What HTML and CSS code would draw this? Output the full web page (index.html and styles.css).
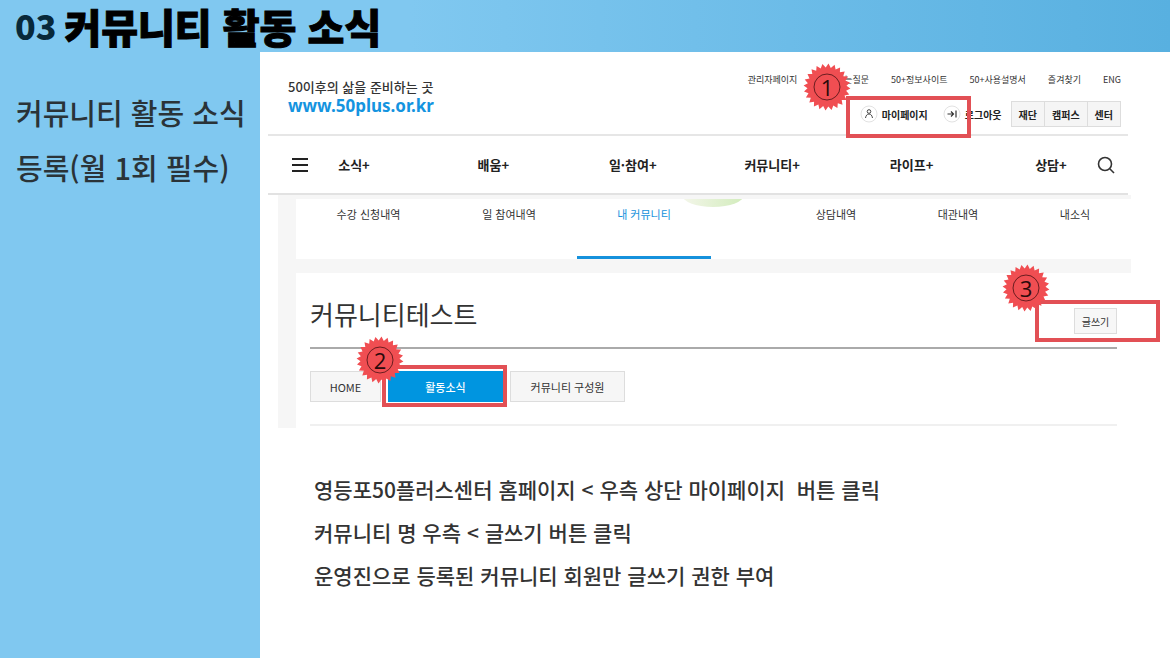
FILE: index.html
```html
<!DOCTYPE html>
<html lang="ko">
<head>
    <meta charset="UTF-8">
    <meta name="viewport" content="width=device-width, initial-scale=1.0">
    <title>커뮤니티 활동 소식</title>
    <link rel="stylesheet" href="styles.css">
</head>
<body>
    <div class="slide">
        <header class="slide-header">
            <span class="slide-number">03</span>
            <h1>커뮤니티 활동 소식</h1>
        </header>
        <div class="slide-body">
            <aside class="side">
                <p>커뮤니티 활동 소식 등록(월 1회 필수)</p>
            </aside>
            <main class="panel">
                <div class="site">
                    <div class="site-top">
                        <div class="brand">
                            <span class="brand-text">50이후의 삶을 준비하는 곳</span>
                            <a class="brand-url" href="#">www.50plus.or.kr</a>
                        </div>
                        <div class="util">
                            <div class="util-links">
                                <a href="#">관리자페이지</a>
                                <a href="#">자주묻는질문</a>
                                <a href="#">50+정보사이트</a>
                                <a href="#">50+사용설명서</a>
                                <a href="#">즐겨찾기</a>
                                <a href="#">ENG</a>
                            </div>
                            <div class="member">
                                <div class="member-links">
                                    <a href="#">
                                        <svg width="18" height="18" viewBox="0 0 18 18"><circle cx="9" cy="9" r="8" fill="#fff" stroke="#e2e2e2"/><circle cx="9" cy="6.500" r="1.800" fill="none" stroke="#444"/><path d="M5.500 13C6 10.500 7 9 9 9s3 1.500 3.500 4" fill="none" stroke="#444"/></svg>
                                        마이페이지
                                    </a>
                                    <a href="#">
                                        <svg width="18" height="18" viewBox="0 0 18 18"><circle cx="9" cy="9" r="8" fill="#fff" stroke="#e2e2e2"/><path d="M4.500 9h6M8 6.500 10.500 9 8 11.500M13 5.500v7" fill="none" stroke="#333" stroke-width="1.200"/></svg>
                                        로그아웃
                                    </a>
                                </div>
                                <div class="sites">
                                    <button type="button">재단</button>
                                    <button type="button">캠퍼스</button>
                                    <button type="button">센터</button>
                                </div>
                            </div>
                        </div>
                    </div>
                    <nav class="site-nav">
                        <button class="icon-button" type="button" aria-label="전체메뉴">
                            <svg width="16" height="16" viewBox="0 0 16 16"><path d="M0 2h16M0 8h16M0 14h16" stroke="#222" stroke-width="2"/></svg>
                        </button>
                        <ul>
                            <li><a href="#">소식+</a></li>
                            <li><a href="#">배움+</a></li>
                            <li><a href="#">일·참여+</a></li>
                            <li><a href="#">커뮤니티+</a></li>
                            <li><a href="#">라이프+</a></li>
                            <li><a href="#">상담+</a></li>
                        </ul>
                        <button class="icon-button" type="button" aria-label="검색">
                            <svg width="18" height="18" viewBox="0 0 18 18"><circle cx="8" cy="8" r="6.500" fill="none" stroke="#333" stroke-width="1.600"/><path d="m13 13 4 4" stroke="#333" stroke-width="1.600"/></svg>
                        </button>
                    </nav>
                </div>

                <div class="mypage">
                    <nav class="tabs">
                        <a href="#">수강 신청내역</a>
                        <a href="#">일 참여내역</a>
                        <a class="active" href="#">내 커뮤니티</a>
                        <a href="#">상담내역</a>
                        <a href="#">대관내역</a>
                        <a href="#">내소식</a>
                    </nav>
                    <section class="community">
                        <div class="community-head">
                            <h2>커뮤니티테스트</h2>
                            <button class="write" type="button">글쓰기</button>
                        </div>
                        <div class="community-menu">
                            <button class="home" type="button">HOME</button>
                            <button class="active" type="button">활동소식</button>
                            <button type="button">커뮤니티 구성원</button>
                        </div>
                    </section>
                </div>

                <div class="guide">
                    <p>영등포50플러스센터 홈페이지 &lt; 우측 상단 마이페이지&nbsp; 버튼 클릭</p>
                    <p>커뮤니티 명 우측 &lt; 글쓰기 버튼 클릭</p>
                    <p>운영진으로 등록된 커뮤니티 회원만 글쓰기 권한 부여</p>
                </div>

                <!-- step marks -->
                <div class="mark mark-1"><div class="badge"><span>1</span></div></div>
                <div class="mark mark-2"><div class="badge"><span>2</span></div></div>
                <div class="mark mark-3"><div class="badge"><span>3</span></div></div>
            </main>
        </div>
    </div>
    <script src="badges.js"></script>
</body>
</html>
```
FILE: badges.js
```js
// puts the toothed seal behind each step number
var TEETH = 24;

function sealPoints() {
    var points = [];
    for (var i = 0; i < TEETH * 2; i++) {
        var r = i % 2 ? 19.5 : 23.5;
        var a = Math.PI * (i + 0.5) / TEETH;
        points.push((24 + r * Math.sin(a)).toFixed(1) + ',' + (24 - r * Math.cos(a)).toFixed(1));
    }
    return points.join(' ');
}

document.querySelectorAll('.badge').forEach(function (badge) {
    badge.insertAdjacentHTML('afterbegin',
        '<svg width="48" height="48" viewBox="0 0 48 48">' +
        '<polygon points="' + sealPoints() + '" fill="#f04e52"/>' +
        '<circle cx="24" cy="24" r="13" fill="none" stroke="#6b1d20"/></svg>');
});
```
FILE: styles.css
```css
* {
    box-sizing: border-box;
}
body {
    margin: 0;
    font-family: "Noto Sans CJK KR", sans-serif;
    color: #333;
}
h1, h2, p, ul {
    margin: 0;
    padding: 0;
}
a {
    color: inherit;
    text-decoration: none;
}
button {
    font-family: inherit;
    color: inherit;
    padding: 0;
    cursor: pointer;
}
.slide {
    display: flex;
    flex-direction: column;
    min-height: 100vh;
    background: linear-gradient(90deg, #80c8f0 35%, #58b0e0);
}
.slide-header {
    display: flex;
    align-items: center;
    gap: 8px;
    height: 52px;
    padding-left: 15px;
}
.slide-number {
    font-size: 34px;
    font-weight: 900;
    line-height: 52px;
    color: #08293a;
}
.slide-header h1 {
    font-size: 40px;
    font-weight: 900;
    line-height: 52px;
    color: #000;
    -webkit-text-stroke: 1px #000;
}
.slide-body {
    display: flex;
    flex: 1;
}
.side {
    width: 260px;
    padding: 33px 0 33px 16px;
    font-size: 29px;
    font-weight: 500;
    line-height: 55px;
    color: #2a3338;
    word-break: keep-all;
}
.panel {
    position: relative;
    flex: 1;
    background: #fff;
}

/* site header */
.site {
    margin: 0 42px 0 8px;
    border-bottom: 2px solid #e2e2e2;
}
.site-top {
    display: flex;
    justify-content: space-between;
    height: 84px;
    padding: 19px 7px 0 20px;
    border-bottom: 2px solid #e6e6e6;
}
.brand {
    display: flex;
    flex-direction: column;
    padding-top: 7px;
}
.brand-text {
    font-size: 13px;
    font-weight: 500;
    line-height: 18px;
}
.brand-url {
    font-family: "Noto Sans", sans-serif;
    font-size: 17px;
    font-weight: 700;
    line-height: 20px;
    color: #1494e0;
}
.util-links {
    display: flex;
    justify-content: flex-end;
    gap: 22px;
    font-size: 9px;
    line-height: 18px;
}
.member {
    display: flex;
    align-items: center;
    justify-content: flex-end;
    gap: 9px;
    margin-top: 12px;
    font-size: 10px;
    font-weight: 700;
    color: #222;
}
.member-links {
    display: flex;
    gap: 15px;
}
.member-links a {
    display: flex;
    align-items: center;
    gap: 4px;
}
.sites {
    display: flex;
    border: 1px solid #ddd;
    background: #f5f5f5;
}
.sites button {
    height: 24px;
    padding: 0 7px;
    border: 0;
    background: none;
    font-size: 10px;
    font-weight: 700;
}
.sites button + button {
    border-left: 1px solid #ddd;
}
.site-nav {
    display: flex;
    align-items: center;
    gap: 16px;
    height: 57px;
    padding: 0 13px 0 24px;
}
.site-nav ul {
    display: flex;
    flex: 1;
    justify-content: space-between;
    list-style: none;
}
.site-nav li {
    width: 60px;
    font-size: 13px;
    font-weight: 700;
    text-align: center;
    color: #222;
}
.icon-button {
    display: flex;
    border: 0;
    background: none;
}

/* my page */
.mypage {
    margin: 0 39px 0 18px;
    padding: 4px 0 0 18px;
    background: #f6f6f6;
}
.tabs {
    position: relative;
    display: grid;
    grid-template-columns: 145fr 136fr 134fr 186fr 122fr 112fr;
    height: 60px;
    background: #fff;
    overflow: hidden;
}
.tabs::before {
    content: "";
    position: absolute;
    top: -16px;
    left: 386px;
    width: 62px;
    height: 24px;
    border-radius: 50%;
    background: linear-gradient(90deg, #f4f6ea, #d2ecbc);
}
.tabs a {
    position: relative;
    font-size: 11px;
    line-height: 30px;
    text-align: center;
}
.tabs a.active {
    border-bottom: 3px solid #1591dc;
    color: #1591dc;
}
.tabs a.active + a {
    padding-left: 64px;
}
.community {
    margin-top: 14px;
    padding: 12px 14px 2px;
    background: #fff;
}
.community-head {
    display: flex;
    align-items: center;
    justify-content: space-between;
    height: 64px;
    padding-bottom: 4px;
    border-bottom: 2px solid #aaa;
}
.community-head h2 {
    font-size: 26px;
    font-weight: 400;
    line-height: 40px;
}
.write {
    width: 43px;
    height: 26px;
    margin-top: 14px;
    border: 1px solid #ddd;
    background: #f7f7f7;
    font-size: 10px;
}
.community-menu {
    display: flex;
    gap: 7px;
    padding: 22px 0;
    border-bottom: 2px solid #f0f0f0;
}
.community-menu button {
    width: 115px;
    height: 31px;
    border: 1px solid #ddd;
    background: #f6f6f6;
    font-size: 11px;
}
.community-menu .home {
    width: 71px;
}
.community-menu .active {
    border-color: #0095e0;
    background: #0095e0;
    font-weight: 500;
    color: #fff;
}

.guide {
    padding: 40px 54px;
    font-size: 21px;
    font-weight: 500;
    line-height: 43px;
}

/* step marks */
.mark {
    position: absolute;
    width: 125px;
    height: 42px;
    border: 4px solid #e25055;
}
.mark-1 {
    top: 44px;
    left: 586px;
}
.mark-2 {
    top: 313px;
    left: 122px;
}
.mark-3 {
    top: 248px;
    left: 775px;
}
.badge {
    position: absolute;
    display: grid;
    width: 48px;
    height: 48px;
    font-family: "Open Sans", sans-serif;
    font-size: 22px;
    line-height: 48px;
    text-align: center;
    color: #2a0a0b;
}
.badge svg,
.badge span {
    grid-area: 1 / 1;
}
.mark-1 .badge {
    top: -37px;
    left: -47px;
}
.mark-2 .badge {
    top: -33px;
    left: -30px;
}
.mark-3 .badge {
    top: -40px;
    left: -37px;
}
```
